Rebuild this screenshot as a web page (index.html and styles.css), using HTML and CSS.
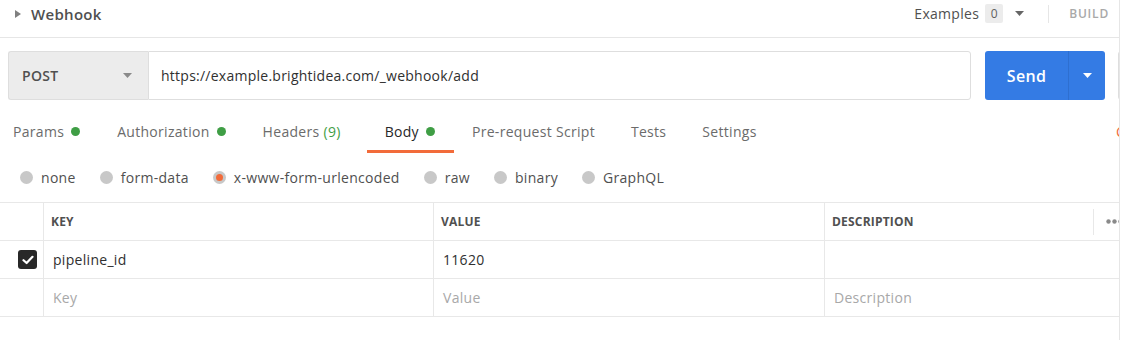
FILE: index.html
```html
<!DOCTYPE html>
<html>
<head>
<meta charset="utf-8">
<link rel="stylesheet" href="styles.css">
</head>
<body>
<div class="panel">
  <header class="topbar">
    <div class="title">
      <svg class="tri" width="6" height="8" viewBox="0 0 6 8"><path d="M0 0 L6 4 L0 8 Z" fill="#808080"/></svg>
      <span>Webhook</span>
    </div>
    <div class="top-right">
      <span class="examples">Examples</span>
      <span class="badge">0</span>
      <svg class="caret-top" width="9" height="5" viewBox="0 0 9 5"><path d="M0 0 L9 0 L4.5 5 Z" fill="#666"/></svg>
      <span class="vdiv"></span>
      <span class="build">BUILD</span>
    </div>
  </header>

  <div class="urlrow">
    <div class="method">
      <span>POST</span>
      <svg width="9" height="5" viewBox="0 0 9 5"><path d="M0 0 L9 0 L4.5 5 Z" fill="#8a8a8a"/></svg>
    </div>
    <div class="url">https://example.brightidea.com/_webhook/add</div>
    <div class="send">
      <span class="send-label">Send</span>
      <span class="send-caret"><svg width="9" height="5" viewBox="0 0 9 5"><path d="M0 0 L9 0 L4.5 5 Z" fill="#fff"/></svg></span>
    </div>
    <div class="save-stub"></div>
  </div>

  <nav class="tabs">
    <div class="tab">Params<i class="dot"></i></div>
    <div class="tab">Authorization<i class="dot"></i></div>
    <div class="tab">Headers <span class="count">(9)</span></div>
    <div class="tab active">Body<i class="dot"></i></div>
    <div class="tab">Pre-request Script</div>
    <div class="tab">Tests</div>
    <div class="tab">Settings</div>
    <div class="tab-spacer"></div>
    <div class="cookies">C</div>
  </nav>

  <div class="radios">
    <label class="radio"><i class="circle"></i>none</label>
    <label class="radio"><i class="circle"></i>form-data</label>
    <label class="radio"><i class="circle on"></i>x-www-form-urlencoded</label>
    <label class="radio"><i class="circle"></i>raw</label>
    <label class="radio"><i class="circle"></i>binary</label>
    <label class="radio"><i class="circle"></i>GraphQL</label>
  </div>

  <div class="table">
    <div class="row head">
      <div class="c0"></div>
      <div class="c1">KEY</div>
      <div class="c2">VALUE</div>
      <div class="c3"><span>DESCRIPTION</span><span class="more"><span class="hdiv"></span><svg class="dots" width="20" height="5" viewBox="0 0 20 5"><circle cx="2.5" cy="2.5" r="2.2" fill="#8a8a8a"/><circle cx="8.5" cy="2.5" r="2.2" fill="#8a8a8a"/><circle cx="14.5" cy="2.5" r="2.2" fill="#8a8a8a"/></svg></span></div>
    </div>
    <div class="row">
      <div class="c0"><span class="check"><svg width="12" height="10" viewBox="0 0 12 10"><path d="M1.5 5.2 L4.6 8 L10.5 1.8" fill="none" stroke="#fff" stroke-width="2.2" stroke-linecap="round" stroke-linejoin="round"/></svg></span></div>
      <div class="c1 val">pipeline_id</div>
      <div class="c2 val">11620</div>
      <div class="c3 val"></div>
    </div>
    <div class="row">
      <div class="c0"></div>
      <div class="c1 val ph">Key</div>
      <div class="c2 val ph">Value</div>
      <div class="c3 val ph">Description</div>
    </div>
  </div>
</div>
</body>
</html>
```

FILE: styles.css
```css
* { box-sizing: border-box; }
html, body { margin: 0; padding: 0; background: #fff; }
body {
  font-family: "Open Sans", "Liberation Sans", sans-serif;
  color: #505050;
  letter-spacing: 0.3px;
  width: 1122px;
  height: 340px;
  overflow: hidden;
}
.panel {
  width: 1120px;
  height: 340px;
  border-right: 1px solid #e6e6e6;
  overflow: hidden;
}
.topbar {
  height: 38px;
  border-bottom: 1px solid #e6e6e6;
  display: flex;
  align-items: center;
  justify-content: space-between;
  padding: 0 10px 0 15px;
}
.title {
  display: flex;
  align-items: center;
  gap: 10px;
  font-size: 15px;
  font-weight: 600;
  color: #505050;
  margin-top: -10px;
}
.top-right {
  display: flex;
  align-items: center;
  margin-top: -10px;
}
.examples { font-size: 14px; color: #505050; }
.badge {
  margin-left: 6px;
  background: #ececec;
  border-radius: 2px;
  font-size: 12px;
  width: 18px;
  height: 19px;
  display: flex;
  align-items: center;
  justify-content: center;
  color: #606060;
  letter-spacing: 0;
}
.caret-top { margin-left: 12px; }
.vdiv {
  width: 1px;
  height: 18px;
  background: #e6e6e6;
  margin-left: 24px;
}
.build {
  margin-left: 20px;
  font-size: 12px;
  font-weight: 600;
  color: #a9a9a9;
  letter-spacing: 0.8px;
}
.urlrow {
  display: flex;
  margin: 13px 0 0 8px;
  height: 49px;
}
.urlrow > div { flex-shrink: 0; }
.method {
  width: 140px;
  background: #ececec;
  border: 1px solid #dedede;
  border-right: none;
  border-radius: 3px 0 0 3px;
  display: flex;
  align-items: center;
  justify-content: space-between;
  padding: 0 16px 0 13px;
  font-size: 14px;
  font-weight: 600;
  color: #505050;
}
.url {
  width: 823px;
  border: 1px solid #dedede;
  border-radius: 0 3px 3px 0;
  display: flex;
  align-items: center;
  padding-left: 12px;
  font-size: 14px;
  color: #303030;
  letter-spacing: 0.25px;
}
.send {
  margin-left: 14px;
  width: 120px;
  background: #347be4;
  border-radius: 3px;
  display: flex;
  color: #fff;
}
.send-label {
  width: 84px;
  display: flex;
  align-items: center;
  justify-content: center;
  font-size: 16px;
  font-weight: 600;
  border-right: 1px solid #2e6fd0;
}
.send-caret {
  flex: 1;
  display: flex;
  align-items: center;
  justify-content: center;
}
.save-stub {
  margin-left: 13px;
  width: 40px;
  border: 1px solid #dedede;
  background: #f4f4f4;
  border-radius: 3px;
}
.tabs {
  display: flex;
  align-items: stretch;
  height: 41px;
  margin-top: 12px;
  padding-left: 13px;
}
.tab {
  display: flex;
  align-items: center;
  padding: 0 18px;
  font-size: 14px;
  color: #6b6b6b;
  border-bottom: 3px solid transparent;
  flex-shrink: 0;
}
.tab:first-child { padding-left: 0; }
.tab.active {
  color: #282828;
  border-bottom-color: #f26b3a;
}
.count { color: #3f9e45; margin-left: 4px; padding-right: 8px; }
.dot {
  width: 9px;
  height: 9px;
  border-radius: 50%;
  background: #3f9e45;
  margin-left: 7px;
  margin-right: 1px;
}
.tab-spacer { flex: 1; }
.cookies {
  display: flex;
  align-items: center;
  color: #f26b3a;
  font-size: 14px;
  margin-right: -6px;
  padding-bottom: 3px;
}
.radios {
  display: flex;
  align-items: center;
  height: 49px;
  padding: 0 0 0 20px;
  gap: 24px;
}
.radio {
  display: flex;
  align-items: center;
  font-size: 14px;
  color: #505050;
  gap: 8px;
}
.circle {
  width: 13px;
  height: 13px;
  border-radius: 50%;
  background: #c8c8c8;
  display: flex;
  align-items: center;
  justify-content: center;
}
.circle.on::after {
  content: "";
  width: 7px;
  height: 7px;
  border-radius: 50%;
  background: #f26b3a;
}
.table {
  border-top: 1px solid #e8e8e8;
}
.row {
  display: grid;
  grid-template-columns: 44px 390px 391px 1fr;
  height: 38px;
  border-bottom: 1px solid #e8e8e8;
}
.row > div {
  display: flex;
  align-items: center;
  border-right: 1px solid #e8e8e8;
}
.row > div:last-child { border-right: none; }
.head > div {
  font-size: 12px;
  font-weight: 700;
  color: #505050;
  padding-left: 7px;
  letter-spacing: 0.2px;
}
.head .c0 { padding-left: 0; }
.head .c3 { justify-content: space-between; padding-right: 0; }
.more { display: flex; align-items: center; height: 100%; margin-right: -7px; }
.hdiv { width: 1px; height: 26px; background: #e8e8e8; margin-right: 12px; }
.dots { display: block; }
.val {
  font-size: 14px;
  color: #303030;
  padding-left: 9px;
}
.ph { color: #a8a8a8; }
.c0 { justify-content: flex-end; padding-right: 6px; }
.check {
  width: 19px;
  height: 19px;
  border-radius: 3px;
  background: #282828;
  display: flex;
  align-items: center;
  justify-content: center;
}
```
